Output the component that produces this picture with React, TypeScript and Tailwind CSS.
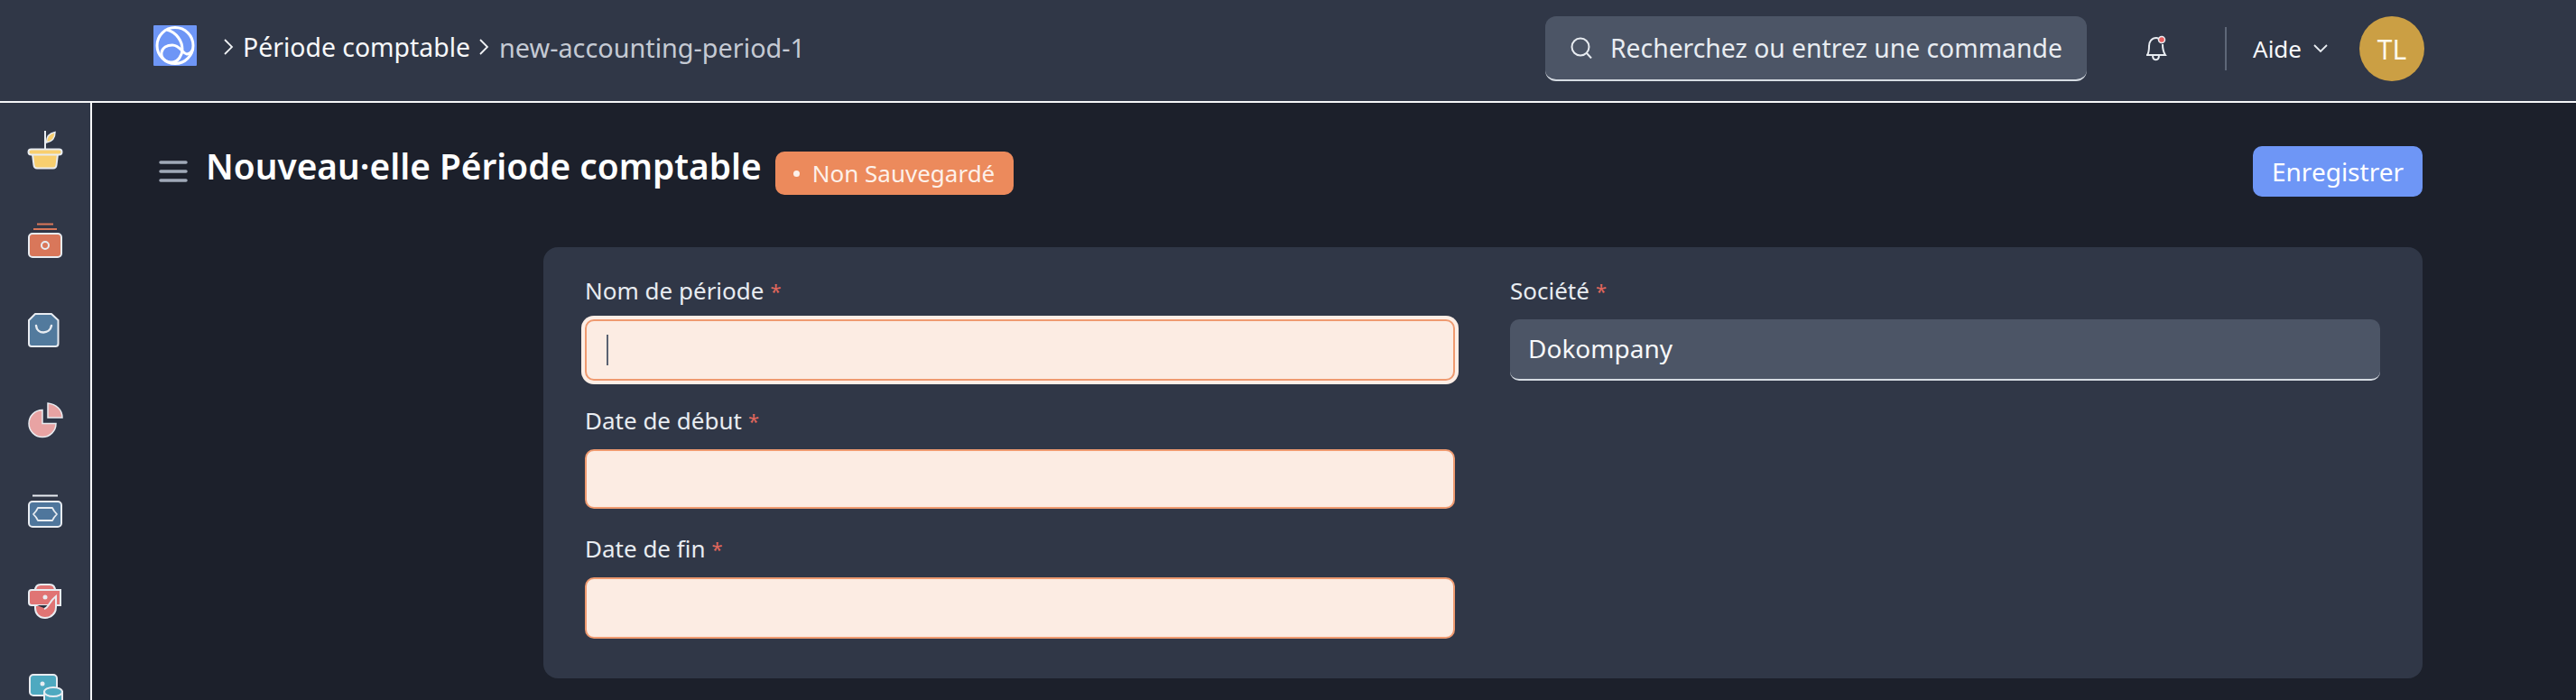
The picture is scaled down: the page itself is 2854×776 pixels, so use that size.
import React from "react";

const S = "#e8ecf1";

function Plant() {
  return (
    <svg width="40" height="40" viewBox="0 0 40 40" className="overflow-visible">
      <path d="M20 -1V20" stroke={S} strokeWidth="2" />
      <path d="M21.500 12C21.500 5 25 1.500 31 0.500C31 7 27.500 11 21.500 12Z" fill="#f8cf6f" stroke={S} strokeWidth="1.500" />
      <path d="M6 25H34L32.500 37C32.300 39 31 40.500 29 40.500H11C9 40.500 7.700 39 7.500 37Z" fill="#f8cf6f" stroke={S} strokeWidth="2" />
      <rect x="1.500" y="19.500" width="37" height="6" rx="3" fill="#f8cf6f" stroke={S} strokeWidth="2" />
    </svg>
  );
}
function Wallet() {
  return (
    <svg width="40" height="40" viewBox="0 0 40 40" className="overflow-visible">
      <path d="M11 2.500H29M7 8H33" stroke="#d9775a" strokeWidth="2" />
      <rect x="2" y="13" width="36" height="26" rx="4" fill="#d9775a" stroke={S} strokeWidth="2" />
      <circle cx="20" cy="26" r="4" fill="none" stroke={S} strokeWidth="2" />
    </svg>
  );
}
function Bag() {
  return (
    <svg width="40" height="40" viewBox="0 0 40 40" className="overflow-visible">
      <path d="M9 2H27L34.500 9V35C34.500 37 33.500 38 31.500 38H5C3 38 2 37 2 35V9Z" fill="#527a9d" stroke={S} strokeWidth="2" strokeLinejoin="round" />
      <path d="M10 15C11 25 25 25 27 15" fill="none" stroke={S} strokeWidth="2.500" strokeLinecap="round" />
    </svg>
  );
}
function Pie() {
  return (
    <svg width="40" height="40" viewBox="0 0 40 40" className="overflow-visible">
      <path d="M17 8.500A15 15 0 1 0 32 23.500H17Z" fill="#e8a3a3" stroke={S} strokeWidth="1.500" />
      <path d="M23 1V17H39C39 8 32 2 23 1Z" fill="#e8a3a3" stroke={S} strokeWidth="1.500" />
    </svg>
  );
}
function Ticket() {
  return (
    <svg width="40" height="40" viewBox="0 0 40 40" className="overflow-visible">
      <path d="M7 4.500V3.500H33V4.500" fill="none" stroke={S} strokeWidth="2" />
      <rect x="2" y="10" width="36" height="28" rx="4" fill="#4f769c" stroke={S} strokeWidth="2" />
      <path d="M12 17H28L30 20.500L33 24L30 27.500L28 31H12L10 27.500L7 24L10 20.500Z" fill="none" stroke={S} strokeWidth="1.800" strokeLinejoin="round" />
    </svg>
  );
}
function Med() {
  return (
    <svg width="40" height="40" viewBox="0 0 40 40" className="overflow-visible">
      <path d="M9 9C9 4 11 2 15 2H25C29 2 31 4 31 9V28C31 35 26 39 20 39C13 39 9 34 9 28Z" fill="#e07474" stroke={S} strokeWidth="2" />
      <path d="M5 8H37V25H5C3 25 2 24 2 22V11C2 9 3 8 5 8Z" fill="#e07474" stroke={S} strokeWidth="2" />
      <path d="M11 25H24L21 29Z" fill="#2a2f3d" />
      <circle cx="20" cy="16" r="2.500" fill={S} />
      <path d="M19 29C24 28 24 21 32 15V27C32 33 28 36 26 37" fill="#e07474" stroke={S} strokeWidth="2" />
    </svg>
  );
}
function Db() {
  return (
    <svg width="40" height="40" viewBox="0 0 40 40" className="overflow-visible">
      <rect x="3" y="2" width="30" height="23" rx="4" fill="#4ea9c0" stroke={S} strokeWidth="2" />
      <circle cx="17" cy="12" r="2.500" fill={S} />
      <path d="M19 21V45H39V21Z" fill="#4ea9c0" stroke={S} strokeWidth="2" />
      <ellipse cx="29" cy="21" rx="10" ry="5" fill="#4ea9c0" stroke={S} strokeWidth="2" />
    </svg>
  );
}

function Logo() {
  return (
    <svg width="48" height="45" viewBox="0 0 48 45" className="shrink-0 -mt-[7px]">
      <rect width="48" height="45" rx="1" fill="#6e96f6" />
      <circle cx="24" cy="22.500" r="20" fill="none" stroke="#fff" strokeWidth="3" />
      <path d="M15 5C26 8 32 18 32 27C32 33 27 41 21 41C13 41 8 36 9 30C10 25 15 22 21 22C29 22 32 31 37 32C40 32 42 30 44 26" fill="none" stroke="#fff" strokeWidth="3" />
    </svg>
  );
}

function Chev({ className = "" }: { className?: string }) {
  return (
    <svg width="12" height="20" viewBox="0 0 12 20" className={className}>
      <path d="M2 2L10 10L2 18" fill="none" stroke="#f0f2f5" strokeWidth="1.800" />
    </svg>
  );
}

function Field({ label, focus, h66 }: { label: string; focus?: boolean; h66?: boolean }) {
  return (
    <div className="flex flex-col mb-[26px]">
      <div className="h-[36px] mb-[14px] flex items-center text-[26px] text-[#e8ecf1]">
        {label} <span className="text-[#e0675c] ml-[7px] text-[22px]">*</span>
      </div>
      <div
        className={
          (h66 ? "h-[66px] " : "h-[68px] ") +
          "rounded-[10px] border-2 border-[#ef9a70] bg-[#fcece3] flex items-center pl-[22px] " +
          (focus ? "shadow-[0_0_0_4px_#fdeee6]" : "")
        }
      >
        {focus && <div className="w-[2px] h-[34px] bg-[#5a6272]" />}
      </div>
    </div>
  );
}

export default function App() {
  return (
    <div className="h-[776px] w-[2854px] overflow-hidden flex flex-col bg-[#1c202b] font-['Noto_Sans',sans-serif]">
      <header className="h-[114px] shrink-0 bg-[#303747] border-b-2 border-[#f5f6f8] flex items-center pl-[170px] pr-[168px] pb-[4px]">
        <Logo />
        <Chev className="ml-[29px] -mt-[4px]" />
        <span className="ml-[10px] text-[28.4px] text-[#f7f8fa] -mt-[3px]">Période comptable</span>
        <Chev className="ml-[9px] -mt-[4px]" />
        <span className="ml-[11px] text-[28.8px] text-[#c5cad4] -mt-[3px]">new-accounting-period-1</span>
        <div className="ml-auto w-[600px] h-[72px] rounded-[12px] bg-[#4c5566] border-b-2 border-[#d5dbe2] flex items-center pl-[28px]">
          <svg width="24" height="24" viewBox="0 0 24 24" fill="none" stroke="#e8ecf1" strokeWidth="2">
            <circle cx="11" cy="11" r="9.500" />
            <path d="M18 18L23 23.500" />
          </svg>
          <span className="ml-[20px] text-[28.3px] text-[#e8ecf1]">Recherchez ou entrez une commande</span>
        </div>
        <svg width="24" height="30" viewBox="0 0 24 30" fill="none" stroke="#e8ecf1" strokeWidth="2" className="ml-[65px]">
          <path d="M2 22C4 19 4 16 4 12C4 7 7 3 12 3C13 3 14 3.500 15 4M19 10C19 15 20 19 22 22H1" />
          <path d="M8 22C8 29 15 29 15 22" />
          <circle cx="18" cy="5" r="3.500" fill="#e85d5d" stroke="#e8ecf1" strokeWidth="1.500" />
        </svg>
        <div className="ml-[64px] w-[2px] h-[48px] bg-[#5e6778]" />
        <span className="ml-[29px] text-[26px] text-[#f7f8fa]">Aide</span>
        <svg width="18" height="12" viewBox="0 0 18 12" className="ml-[12px]">
          <path d="M2 2L9 9L16 2" fill="none" stroke="#e8ecf1" strokeWidth="1.800" />
        </svg>
        <div className="ml-[34px] w-[72px] h-[72px] rounded-full bg-[#cb9f44] flex items-center justify-center text-[30px] text-[#fdf8ea]">TL</div>
      </header>
      <div className="flex flex-1 min-h-0">
        <aside className="w-[102px] shrink-0 bg-[#303747] border-r-2 border-[#f5f6f8] flex flex-col items-center pt-[32px] gap-[60px] overflow-hidden">
          <Plant />
          <Wallet />
          <Bag />
          <Pie />
          <Ticket />
          <Med />
          <Db />
        </aside>
        <main className="flex-1 min-w-0 pl-[74px] pr-[170px] pt-[48px]">
          <div className="h-[56px] flex items-center">
            <svg width="32" height="26" viewBox="0 0 32 26">
              <path d="M2 3H30M2 13H30M2 23H30" stroke="#a0a9b8" strokeWidth="3.500" strokeLinecap="round" />
            </svg>
            <h1 className="ml-[20px] text-[38.8px] font-semibold text-white -mt-[12px]">Nouveau·elle Période comptable</h1>
            <div className="ml-[15px] mt-[4px] h-[48px] rounded-[10px] bg-[#ec8a5c] flex items-center pl-[20px] pr-[21px] text-[26px] text-[#fdf1ea]">
              <span className="w-[7px] h-[7px] rounded-full bg-[#fdf1ea] mr-[14px]" />
              Non Sauvegardé
            </div>
            <button className="ml-auto h-[56px] w-[188px] rounded-[10px] bg-[#6e96f6] text-[28px] text-white">Enregistrer</button>
          </div>
          <section className="ml-[426px] mt-[56px] rounded-[16px] bg-[#303747] pt-[30px] pb-[18px] pl-[46px] pr-[47px] grid grid-cols-2 gap-x-[61px]">
            <div>
              <Field label="Nom de période" focus />
              <Field label="Date de début" h66 />
              <Field label="Date de fin" />
            </div>
            <div>
              <div className="h-[36px] mb-[14px] flex items-center text-[26px] text-[#e8ecf1]">
                Société <span className="text-[#e0675c] ml-[7px] text-[22px]">*</span>
              </div>
              <div className="h-[68px] rounded-[10px] bg-[#4c5566] border-b-2 border-[#d5dbe2] flex items-center pl-[20px] pb-[2px] text-[28px] text-[#f7f8fa]">Dokompany</div>
            </div>
          </section>
        </main>
      </div>
    </div>
  );
}
